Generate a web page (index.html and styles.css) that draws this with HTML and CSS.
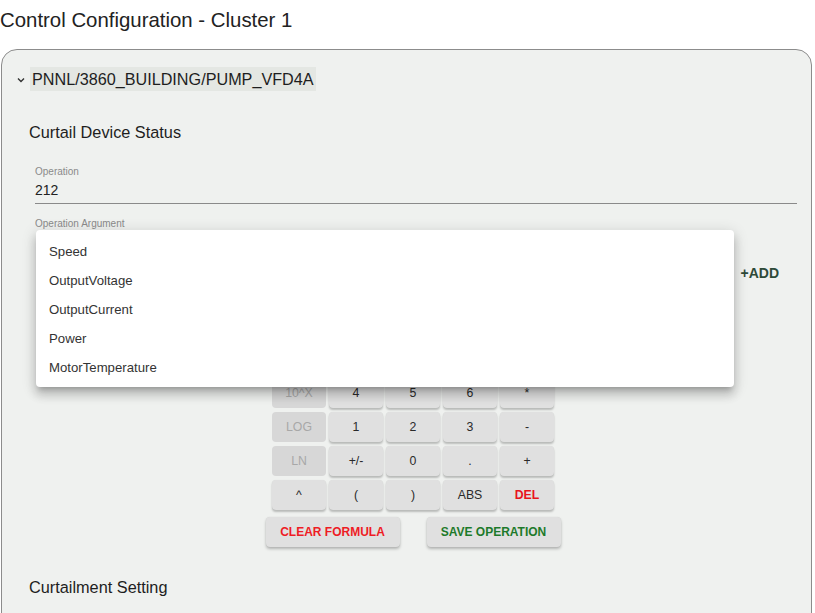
FILE: index.html
```html
<!DOCTYPE html>
<html>
<head>
<meta charset="utf-8">
<link rel="stylesheet" href="styles.css">
</head>
<body>
<h1 class="page-title">Control Configuration - Cluster 1</h1>
<div class="card">
  <div class="device-header">
    <svg class="chevron" width="8" height="6" viewBox="0 0 8 6"><path d="M1 1.5 L4 4.5 L7 1.5" fill="none" stroke="#333" stroke-width="1.4"/></svg>
    <span class="device-name">PNNL/3860_BUILDING/PUMP_VFD4A</span>
  </div>

  <h2 class="section-title">Curtail Device Status</h2>

  <div class="field">
    <div class="field-label">Operation</div>
    <div class="field-value">212</div>
  </div>

  <div class="arg-block">
    <div class="field-label arg-label">Operation Argument</div>
    <div class="select-line"></div>
    <div class="formula-row">
      <div class="formula-input"></div>
      <button class="add-btn">+ADD</button>
    </div>

    <ul class="menu">
      <li>Speed</li>
      <li>OutputVoltage</li>
      <li>OutputCurrent</li>
      <li>Power</li>
      <li>MotorTemperature</li>
    </ul>
  </div>

  <div class="calc">
    <button class="key">X^2</button><button class="key">SQRT</button><button class="key">%</button><button class="key">1/X</button><button class="key">CE</button>
    <button class="key off">EXP</button><button class="key">7</button><button class="key">8</button><button class="key">9</button><button class="key">/</button>
    <button class="key off">10^X</button><button class="key">4</button><button class="key">5</button><button class="key">6</button><button class="key">*</button>
    <button class="key off">LOG</button><button class="key">1</button><button class="key">2</button><button class="key">3</button><button class="key">-</button>
    <button class="key off">LN</button><button class="key">+/-</button><button class="key">0</button><button class="key">.</button><button class="key">+</button>
    <button class="key">^</button><button class="key">(</button><button class="key">)</button><button class="key">ABS</button><button class="key del">DEL</button>
  </div>

  <div class="actions">
    <button class="action clear">CLEAR FORMULA</button>
    <button class="action save">SAVE OPERATION</button>
  </div>

  <h2 class="section-title setting">Curtailment Setting</h2>
  <div class="spacer"></div>
</div>
</body>
</html>
```

FILE: styles.css
```css
html, body {
  margin: 0;
  padding: 0;
  background: #ffffff;
  font-family: "Liberation Sans", Arial, sans-serif;
  color: #222;
}

.page-title {
  margin: 0;
  padding-top: 8px;
  font-size: 20.4px;
  line-height: 24px;
  font-weight: normal;
  color: #222;
}

.card {
  margin: 17px 0 0 1px;
  border: 1px solid #8c8c8c;
  border-radius: 16px;
  background: #eff1ef;
  padding: 17px 14px 0 27px;
  box-sizing: border-box;
  width: 811px;
}

.device-header {
  display: flex;
  align-items: center;
  margin-left: -12px;
  height: 24px;
}

.chevron {
  display: block;
  width: 8px;
  height: 6px;
  margin-right: 5px;
  margin-top: 1px;
}

.device-name {
  background: #e4e7e3;
  padding: 0 2px;
  line-height: 24px;
  font-size: 16.2px;
  color: #1e1e1e;
}

.section-title {
  margin: 31px 0 0 0;
  font-size: 16.3px;
  line-height: 20px;
  font-weight: normal;
  color: #1e1e1e;
}

.field {
  margin: 24px 0 0 6px;
  border-bottom: 1px solid #8a8a8a;
  padding-bottom: 4px;
}

.field-label {
  font-size: 10px;
  line-height: 12px;
  color: #8a8a8a;
}

.field-value {
  margin-top: 3px;
  font-size: 14px;
  line-height: 18px;
  color: #222;
}

.arg-block {
  position: relative;
  margin: 14px 0 0 6px;
}

.select-line {
  height: 28px;
}

.formula-row {
  display: flex;
  align-items: center;
  margin-top: 3px;
  height: 24px;
}

.formula-input {
  flex: 1;
  height: 20px;
}

.add-btn {
  border: none;
  background: transparent;
  font-family: "Liberation Sans", Arial, sans-serif;
  font-weight: bold;
  font-size: 14px;
  color: #2e4a38;
  padding: 0 18px 0 0;
  line-height: 24px;
}

.menu {
  position: absolute;
  left: 1px;
  top: 12px;
  width: 698px;
  margin: 0;
  padding: 7px 0 5px 0;
  list-style: none;
  background: #ffffff;
  border-radius: 4px;
  box-shadow: 0 5px 5px -3px rgba(0,0,0,0.2), 0 8px 10px 1px rgba(0,0,0,0.14), 0 3px 14px 2px rgba(0,0,0,0.12);
  z-index: 10;
}

.menu li {
  height: 29px;
  line-height: 29px;
  padding-left: 13px;
  font-size: 13.2px;
  color: #333;
}

.calc {
  display: grid;
  grid-template-columns: repeat(5, 54px);
  grid-auto-rows: 30px;
  column-gap: 3px;
  row-gap: 4px;
  width: 282px;
  margin: 25px auto 0 auto;
}

.key {
  border: none;
  border-radius: 4px;
  background: #e0e0e0;
  box-shadow: 0 2px 2px rgba(0,0,0,0.22), 0 0 1px rgba(0,0,0,0.1);
  font-family: "Liberation Sans", Arial, sans-serif;
  font-size: 12.3px;
  color: #2a2a2a;
  padding: 0;
}

.key.off {
  background: #d7d7d7;
  color: #a8a8a8;
  box-shadow: none;
}

.key.del {
  color: #e8141c;
  font-weight: bold;
}

.actions {
  display: flex;
  justify-content: center;
  gap: 27px;
  margin-top: 7px;
}

.action {
  width: 134px;
  height: 30px;
  border: none;
  border-radius: 4px;
  background: #e0e0e0;
  box-shadow: 0 2px 3px rgba(0,0,0,0.25), 0 0 1px rgba(0,0,0,0.12);
  font-family: "Liberation Sans", Arial, sans-serif;
  font-weight: bold;
  font-size: 12px;
  padding: 0;
}

.action.clear {
  color: #ee1c25;
}

.action.save {
  color: #1d7a2a;
}

.section-title.setting {
  margin-top: 30px;
}

.spacer {
  height: 60px;
}
```
